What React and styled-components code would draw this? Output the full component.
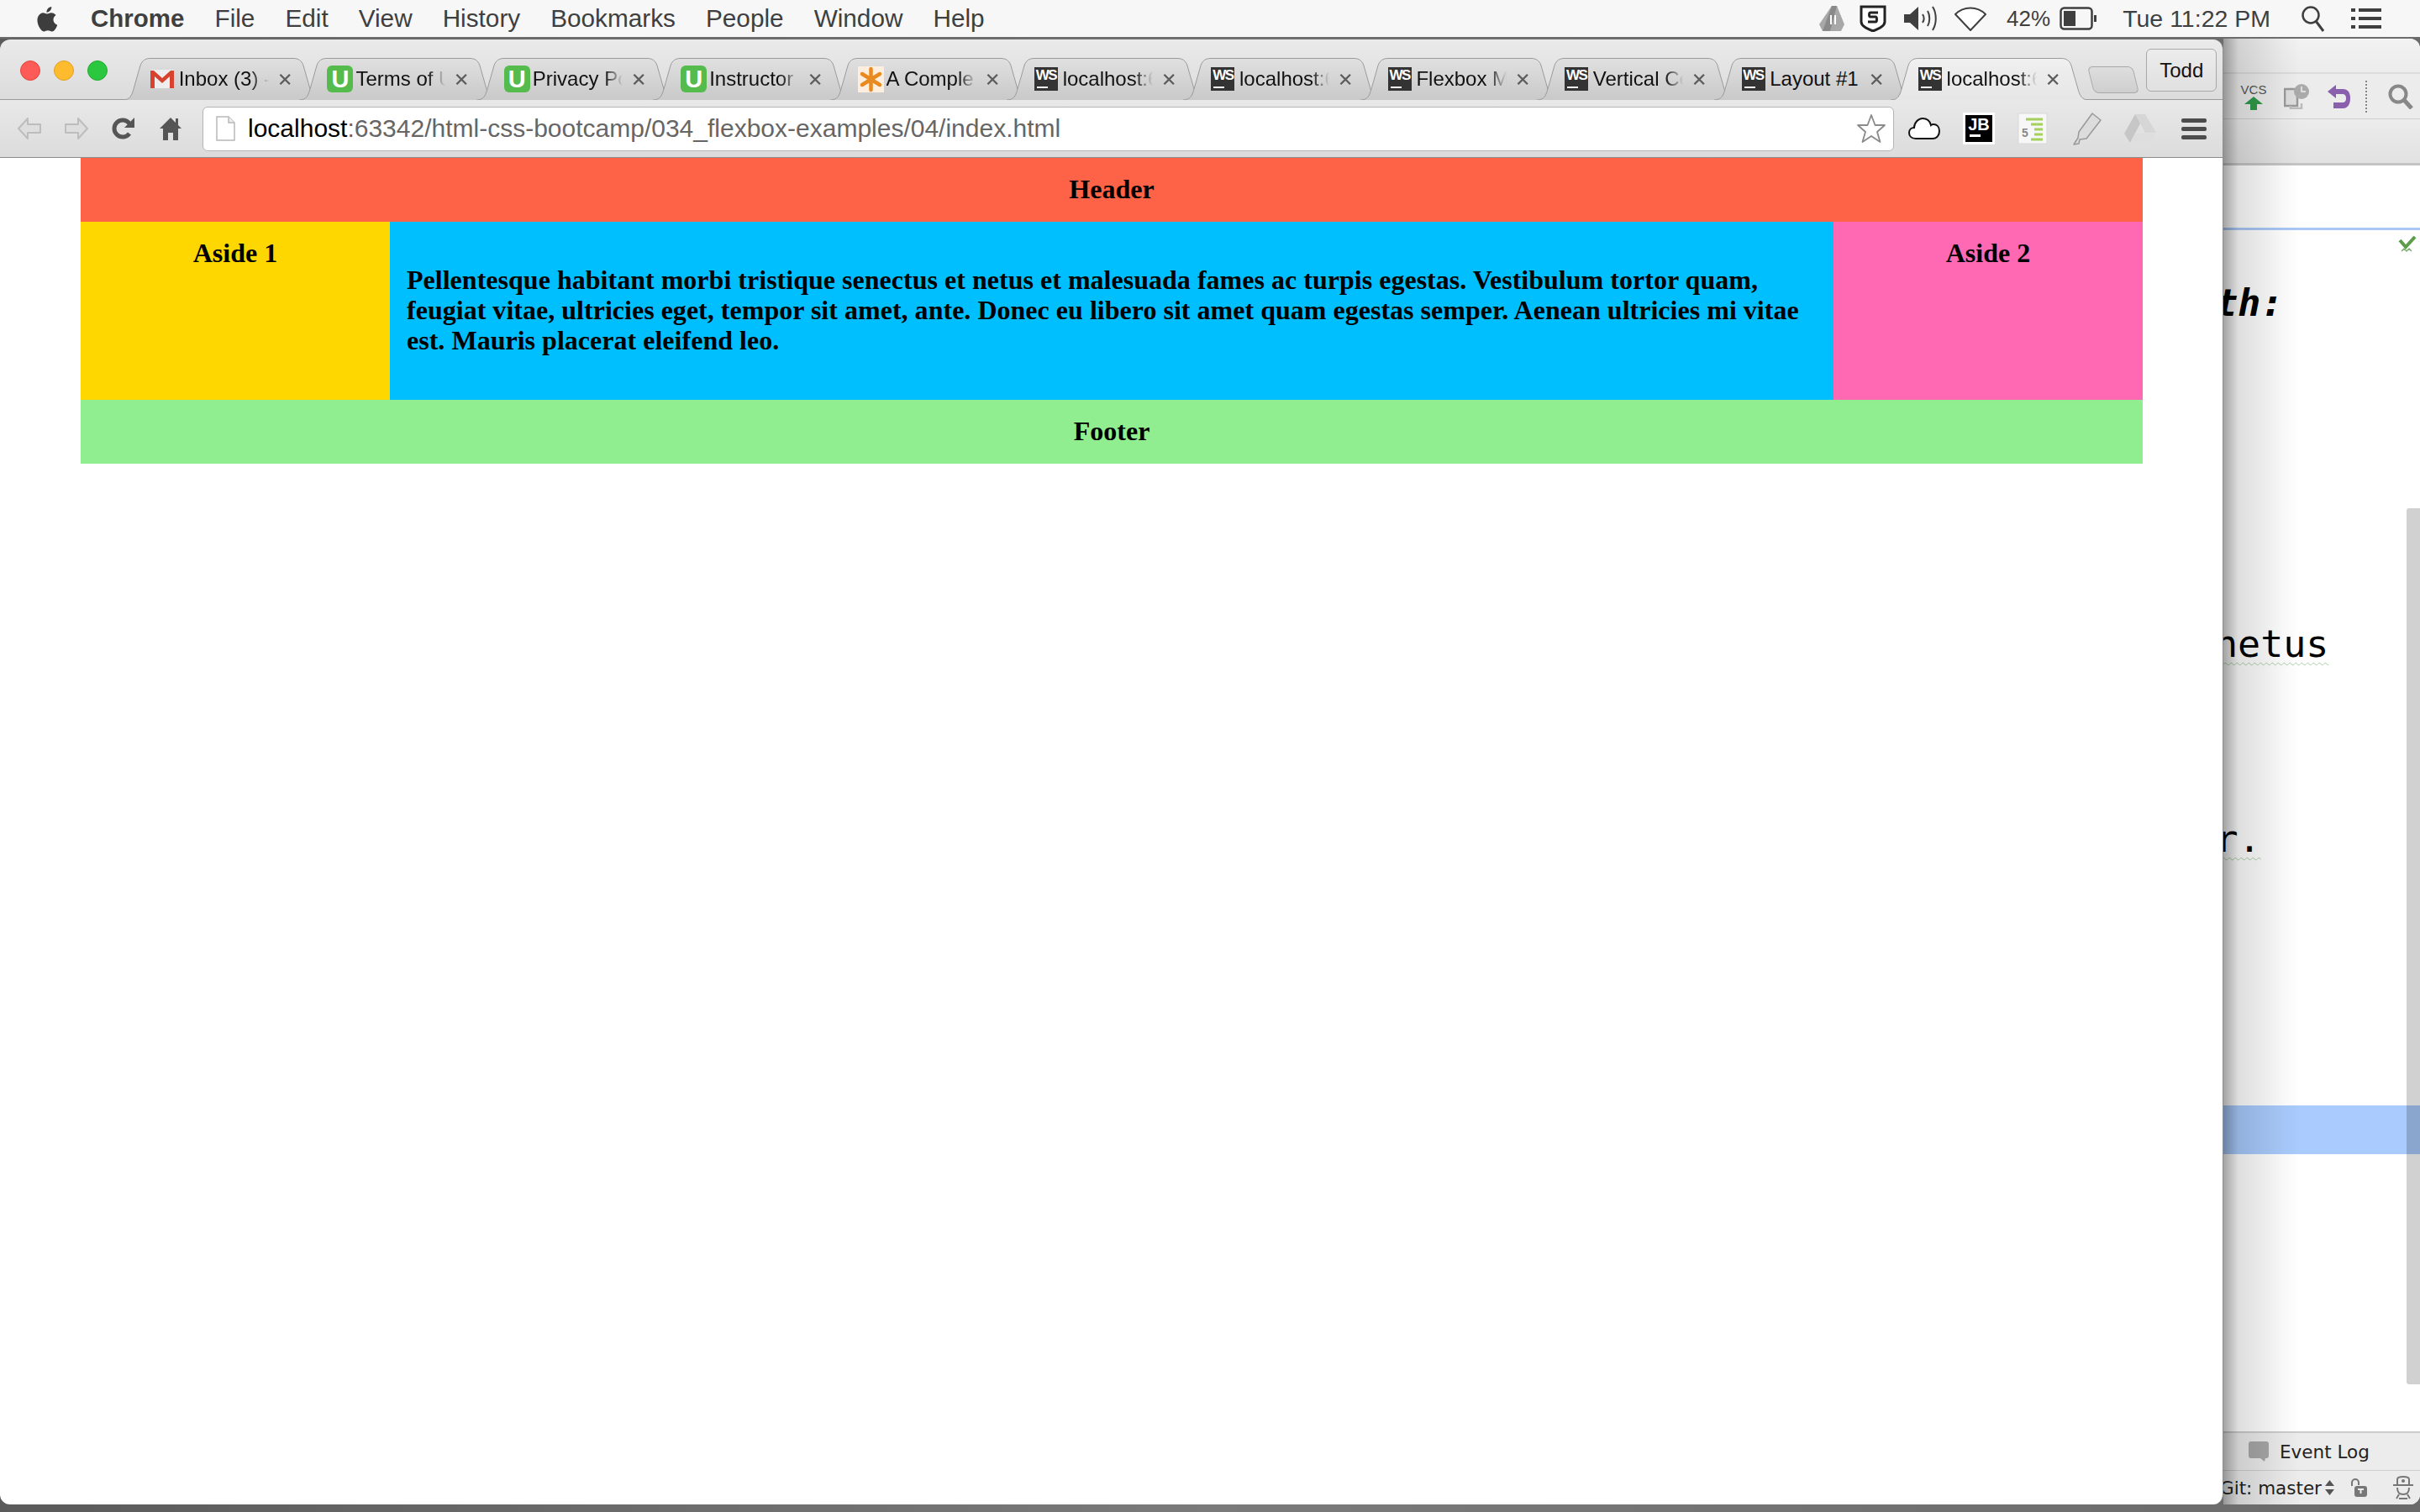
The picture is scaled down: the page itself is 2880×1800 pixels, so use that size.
import styled, { createGlobalStyle } from "styled-components";

const GlobalStyle = createGlobalStyle`
  html, body {
    margin: 0;
    padding: 0;
    background: #fff;
  }
`

const tabs = [
  { icon: 'gmail', title: 'Inbox (3) - G' },
  { icon: 'u', title: 'Terms of Us' },
  { icon: 'u', title: 'Privacy Po' },
  { icon: 'u', title: 'Instructor' },
  { icon: 'star', title: 'A Comple' },
  { icon: 'ws', title: 'localhost:6' },
  { icon: 'ws', title: 'localhost:6' },
  { icon: 'ws', title: 'Flexbox M' },
  { icon: 'ws', title: 'Vertical Ce' },
  { icon: 'ws', title: 'Layout #1', plain: true },
  { icon: 'ws', title: 'localhost:6', active: true },
];

const menus = ['File', 'Edit', 'View', 'History', 'Bookmarks', 'People', 'Window', 'Help'];

const TabIcon = ({ icon }) => {
  if (icon === 'u') return <UBadge>U</UBadge>;
  if (icon === 'ws') return <WsBadge>WS</WsBadge>;
  if (icon === 'gmail') {
    return (
      <svg width="28" height="22" viewBox="0 0 28 22">
        <rect width="28" height="22" fill="#eee" />
        <path d="M0 22V1h4l10 9 10-9h4v21h-5V8l-9 8-9-8v14z" fill="#d8432f" />
      </svg>
    );
  }
  return (
    <svg width="31" height="31" viewBox="0 0 31 31">
      <rect width="31" height="31" fill="#fdeee0" />
      <path d="M15.5 3v25M5 9l21 13M26 9L5 22" stroke="#e88a1f" strokeWidth="4.5" strokeLinecap="round" />
    </svg>
  );
};

const App = () => {
  return (
    <Desktop>
      <GlobalStyle />
      <MenuBar>
        <svg width="26" height="31" viewBox="0 0 26 31" style={{ marginRight: 4 }}>
          <path d="M21.5 16.5c0-3.600 3-5.300 3.100-5.400-1.700-2.500-4.300-2.800-5.200-2.900-2.200-.2-4.300 1.300-5.400 1.300s-2.800-1.300-4.700-1.300C7.400 8.300 5 9.700 3.700 11.900c-2.600 4.500-.7 11.200 1.900 14.900 1.200 1.800 2.700 3.800 4.600 3.700 1.900-.1 2.600-1.200 4.800-1.200s2.900 1.200 4.800 1.200c2 0 3.300-1.800 4.500-3.600 1.400-2.100 2-4.100 2-4.200-.1 0-4.800-1.800-4.800-6.200zM17.800 5.600c1-1.200 1.700-2.900 1.500-4.600-1.500.1-3.200 1-4.300 2.200-.9 1.100-1.800 2.800-1.500 4.500 1.700.1 3.300-.9 4.300-2.100z" fill="#3d3d3d" />
        </svg>
        <MenuTitle>Chrome</MenuTitle>
        {menus.map((m) => <MenuItem key={m}>{m}</MenuItem>)}
        <Tray>
          <svg width="30" height="30" viewBox="0 0 30 30">
            <path d="M15 0h6l9 22-4 8H4L0 22z" fill="#a8a8a8" />
            <path d="M15 0l6 0-8 30H4z" fill="#8a8a8a" />
            <path d="M13 11h2v11h-2zM18 11h2v11h-2z" fill="#fff" />
          </svg>
          <svg width="32" height="32" viewBox="0 0 32 32" style={{ marginLeft: 18 }}>
            <path d="M2 2h28v18c0 5-7 8-14 11C9 28 2 25 2 20z" fill="#fff" stroke="#222" strokeWidth="3" />
            <path d="M22 9h-9c-2 0-2 5 0 5h6c2 0 2 6 0 6h-9" fill="none" stroke="#222" strokeWidth="3" />
          </svg>
          <svg width="42" height="32" viewBox="0 0 42 32" style={{ marginLeft: 20 }}>
            <path d="M1 11h7l10-9v28L8 21H1z" fill="#3f3f3f" />
            <path d="M23 11c2 3 2 7 0 10M29 7c3 5 3 13 0 18M35 2c5 8 5 20 0 28" fill="none" stroke="#3f3f3f" strokeWidth="2" />
          </svg>
          <svg width="40" height="30" viewBox="0 0 40 30" style={{ marginLeft: 18 }}>
            <path d="M2 10C12 0 28 0 38 10L20 29z" fill="#fff" stroke="#3f3f3f" strokeWidth="2" strokeLinejoin="round" />
          </svg>
          <TrayText $size={26} style={{ marginLeft: 23 }}>42%</TrayText>
          <svg width="44" height="28" viewBox="0 0 44 28" style={{ marginLeft: 11 }}>
            <rect x="1.500" y="1.500" width="37" height="25" rx="4" fill="none" stroke="#3f3f3f" strokeWidth="2.500" />
            <rect x="5" y="5" width="14" height="18" fill="#3f3f3f" />
            <rect x="41" y="10" width="3" height="8" fill="#3f3f3f" />
          </svg>
          <TrayText $size={28.500} style={{ marginLeft: 31 }}>Tue 11:22 PM</TrayText>
          <svg width="30" height="32" viewBox="0 0 30 32" style={{ marginLeft: 36 }}>
            <circle cx="12" cy="12" r="9.500" fill="none" stroke="#3f3f3f" strokeWidth="2.500" />
            <path d="M18 19l9 12" stroke="#3f3f3f" strokeWidth="3" />
          </svg>
          <svg width="36" height="24" viewBox="0 0 36 24" style={{ marginLeft: 30 }}>
            <path d="M0 0h5v4H0zM9 0h27v4H9zM0 10h5v4H0zM9 10h27v4H9zM0 20h5v4H0zM9 20h27v4H9z" fill="#3f3f3f" />
          </svg>
        </Tray>
      </MenuBar>

      <Desk>
        <Browser>
          <TabStrip>
            <Lights>
              <Light $color="#fc5b57" $edge="#e2463f" />
              <Light $color="#ffbb2e" $edge="#e0a028" />
              <Light $color="#2bc83f" $edge="#25a934" />
            </Lights>
            <Tabs>
              {tabs.map((t, i) => (
                <Tab key={i} $active={t.active}>
                  <TabShape viewBox="0 0 236 50" $active={t.active}>
                    <defs>
                      <linearGradient id={`tab${i}`} x1="0" y1="0" x2="0" y2="1">
                        <stop offset="0" stopColor={t.active ? '#f0f0f0' : '#e0e0e0'} />
                        <stop offset="1" stopColor={t.active ? '#e6e6e6' : '#c9c9c9'} />
                      </linearGradient>
                    </defs>
                    <path
                      d="M0 50C9 50 11 44 13 37L21 9C23 3 27 .5 33 .5H203C209 .5 213 3 215 9L223 37C225 44 227 50 236 50"
                      fill={`url(#tab${i})`}
                      stroke="#9a9a9a"
                    />
                  </TabShape>
                  <TabIconSlot><TabIcon icon={t.icon} /></TabIconSlot>
                  <TabTitle $plain={t.plain}>{t.title}</TabTitle>
                  <svg width="15" height="15" viewBox="0 0 15 15" style={{ position: 'relative', marginRight: 10 }}>
                    <path d="M1.500 1.500l12 12M13.500 1.500l-12 12" stroke="#5c5c5c" strokeWidth="2.500" />
                  </svg>
                </Tab>
              ))}
            </Tabs>
            <NewTab />
            <ProfileButton>Todd</ProfileButton>
          </TabStrip>

          <Toolbar>
            <NavSlot>
              <svg width="32" height="28" viewBox="0 0 32 28">
                <path d="M14 2L3 14l11 12v-7h15V9H14z" fill="#dedede" stroke="#bdbdbd" strokeWidth="2" strokeLinejoin="round" />
              </svg>
            </NavSlot>
            <NavSlot>
              <svg width="32" height="28" viewBox="0 0 32 28">
                <path d="M18 2l11 12-11 12v-7H3V9h15z" fill="#dedede" stroke="#bdbdbd" strokeWidth="2" strokeLinejoin="round" />
              </svg>
            </NavSlot>
            <NavSlot>
              <svg width="30" height="30" viewBox="0 0 30 30">
                <path d="M22 21a10 10 0 1 1 0-12" fill="none" stroke="#555" strokeWidth="5" />
                <path d="M28 2v12H16z" fill="#555" />
              </svg>
            </NavSlot>
            <NavSlot>
              <svg width="26" height="30" viewBox="0 0 26 30">
                <path d="M13 2L0 15h4v14h6v-9h6v9h6V15h4l-4-4V3h-3v5z" fill="#555" />
              </svg>
            </NavSlot>
            <Omnibox>
              <svg width="23" height="30" viewBox="0 0 23 30">
                <path d="M1 1h14l7 7v21H1z" fill="#fff" stroke="#b8b8b8" strokeWidth="1.500" />
                <path d="M15 1v7h7" fill="#eee" stroke="#b8b8b8" strokeWidth="1.500" />
              </svg>
              <Url><b>localhost</b>:63342/html-css-bootcamp/034_flexbox-examples/04/index.html</Url>
              <StarSlot>
                <svg width="36" height="36" viewBox="0 0 36 36">
                  <path d="M18 2l4.500 12H34l-9 8 3.500 12L18 27 7.500 34 11 22l-9-8h11.500z" fill="#fff" stroke="#8a8a8a" strokeWidth="1.800" strokeLinejoin="round" />
                </svg>
              </StarSlot>
            </Omnibox>
            <Extensions>
              <ExtSlot>
                <svg width="40" height="28" viewBox="0 0 40 28">
                  <path d="M9 26C3 26 1 22 1 19c0-4 3-6 6-6 0-6 5-11 10-11 6 0 9 4 10 8 1-1 2-1 3-1 4 0 7 3 7 8 0 5-3 9-8 9z" fill="#fff" stroke="#111" strokeWidth="2" />
                </svg>
              </ExtSlot>
              <ExtSlot>
                <JbBadge>JB</JbBadge>
              </ExtSlot>
              <ExtSlot>
                <svg width="36" height="38" viewBox="0 0 36 38">
                  <rect x="1" y="1" width="34" height="36" fill="#f7f7f7" stroke="#d8d8d8" />
                  <path d="M10 8h20M16 14h14M20 20h10M20 26h10M16 32h14" stroke="#a4d05c" strokeWidth="3" />
                  <text x="5" y="29" fontSize="14" fontWeight="700" fontFamily="Liberation Sans, sans-serif" fill="#888">5</text>
                </svg>
              </ExtSlot>
              <ExtSlot>
                <svg width="38" height="40" viewBox="0 0 38 40">
                  <path d="M26 2l10 8-17 22-8 1-1 5-6 1 5-8 1-7z" fill="#dcdcdc" stroke="#999" strokeWidth="1.500" strokeLinejoin="round" />
                </svg>
              </ExtSlot>
              <ExtSlot>
                <svg width="38" height="34" viewBox="0 0 38 34">
                  <path d="M13 0h12l13 22H25z" fill="#d6d6d6" />
                  <path d="M13 0l6 11-12 23L0 23z" fill="#c6c6c6" />
                  <path d="M13 23h25l-6 11H7z" fill="#dedede" />
                </svg>
              </ExtSlot>
              <ExtSlot>
                <MenuBars><i /><i /><i /></MenuBars>
              </ExtSlot>
            </Extensions>
          </Toolbar>

          <Page>
            <PageHeader>Header</PageHeader>
            <Middle>
              <Aside $bg="#ffd700">Aside 1</Aside>
              <Main>
                <p>Pellentesque habitant morbi tristique senectus et netus et malesuada fames ac turpis egestas. Vestibulum tortor quam, feugiat vitae, ultricies eget, tempor sit amet, ante. Donec eu libero sit amet quam egestas semper. Aenean ultricies mi vitae est. Mauris placerat eleifend leo.</p>
              </Main>
              <Aside $bg="#ff69b4">Aside 2</Aside>
            </Middle>
            <PageFooter>Footer</PageFooter>
          </Page>
        </Browser>

        <Ide>
          <IdeTitle />
          <IdeToolbar>
            <Vcs>
              VCS
              <svg width="22" height="16" viewBox="0 0 22 16">
                <path d="M11 0l11 9h-7v7H7V9H0z" fill="#2f9a4a" />
              </svg>
            </Vcs>
            <svg width="30" height="30" viewBox="0 0 30 30">
              <rect x="1" y="6" width="15" height="20" fill="#ddd" stroke="#999" strokeWidth="2.500" />
              <path d="M8 26v3h13v-6" fill="none" stroke="#bbb" strokeWidth="2.500" />
              <circle cx="21" cy="9" r="9" fill="#aaa" />
              <path d="M21 3v6h5" fill="none" stroke="#eee" strokeWidth="1.500" />
            </svg>
            <svg width="28" height="30" viewBox="0 0 28 30">
              <path d="M11 1L1 9l10 8v-5h7c4 0 5 2 5 5s-1 5-5 5H8v7h11c6 0 9-5 9-12S25 6 19 6h-8z" fill="#8a5fae" />
            </svg>
            <Dots />
            <svg width="30" height="30" viewBox="0 0 30 30">
              <circle cx="12" cy="12" r="9.500" fill="none" stroke="#888" strokeWidth="4" />
              <path d="M19 19l9 10" stroke="#888" strokeWidth="5" />
            </svg>
          </IdeToolbar>
          <IdeTabsBand />
          <Editor>
            <CaretLine />
            <CodeLine $top={61} $shift={-91} $heading>width:</CodeLine>
            <CodeLine $top={354} $shift={-10} $squiggle>netus</CodeLine>
            <CodeLine $top={180} $shift={-145} $squiggle>semper.</CodeLine>
            <SelectedRow />
            <CheckMark width="22" height="20" viewBox="0 0 22 20">
              <path d="M2 5l7 8L20 1" fill="none" stroke="#5c9c4a" strokeWidth="4" />
              <path d="M4 18l3-3 3 3 3-3 3 3" fill="none" stroke="#7fb070" strokeWidth="1.500" />
            </CheckMark>
            <Scrollbar />
          </Editor>
          <StatusRow>
            <svg width="24" height="24" viewBox="0 0 24 24">
              <path d="M3 0h18a3 3 0 0 1 3 3v14a3 3 0 0 1-3 3h-1l-1 4-5-4H3a3 3 0 0 1-3-3V3a3 3 0 0 1 3-3z" fill="#a8a8a8" />
            </svg>
            <StatusText>Event Log</StatusText>
          </StatusRow>
          <GitRow>
            <GitText>Git: master</GitText>
            <svg width="11" height="18" viewBox="0 0 11 18" style={{ marginLeft: 4 }}>
              <path d="M5.500 0L11 7H0zM0 11h11l-5.500 7z" fill="#555" />
            </svg>
            <svg width="20" height="24" viewBox="0 0 20 24" style={{ marginLeft: 20 }}>
              <path d="M1 10V6a4 4 0 0 1 8 0v3" fill="none" stroke="#777" strokeWidth="2" />
              <rect x="4" y="10" width="15" height="13" rx="3" fill="#777" />
              <path d="M8 14h7M11.500 14v5" stroke="#eee" strokeWidth="2" />
            </svg>
            <svg width="26" height="28" viewBox="0 0 26 28" style={{ marginLeft: 29 }}>
              <path d="M6 11V4c0-2 3-3 7-3s7 1 7 3v7M1 11h24M6 14c0 6 2 8 7 8s7-2 7-8M5 27l3-5M21 27l-3-5M8 27h10" fill="none" stroke="#777" strokeWidth="2" />
              <circle cx="13" cy="6" r="2" fill="#777" />
            </svg>
          </GitRow>
        </Ide>
      </Desk>
    </Desktop>
  )
}

export default App;


const Desktop = styled.div`
  width: 2880px;
  height: 1800px;
  display: flex;
  flex-direction: column;
  overflow: hidden;
  background: linear-gradient(90deg, #5a5a5a, #7a7a7a 50%, #6a6a6a);
`

const MenuBar = styled.div`
  height: 44px;
  flex-shrink: 0;
  display: flex;
  align-items: center;
  padding-left: 42px;
  gap: 36px;
  background: #f7f7f8;
  border-bottom: 2px solid #6c6c6c;
  font-family: "Liberation Sans", Arial, sans-serif;
  font-size: 29.750px;
  color: #3f3f3f;
`

const MenuTitle = styled.span`
  font-weight: 700;
  font-size: 29.500px;
`

const MenuItem = styled.span``

const Tray = styled.div`
  margin-left: auto;
  padding-right: 46px;
  display: flex;
  align-items: center;
`

const TrayText = styled.span`
  font-size: ${(p) => p.$size}px;
  white-space: nowrap;
`

const Desk = styled.div`
  flex: 1;
  min-height: 0;
  display: flex;
  padding-bottom: 9px;
`

const Browser = styled.div`
  width: 2646px;
  flex-shrink: 0;
  margin-top: 1px;
  display: flex;
  flex-direction: column;
  border-radius: 12px 12px 12px 12px;
  overflow: hidden;
  border-right: 1px solid #8f8f8f;
  box-sizing: border-box;
  font-family: "Liberation Sans", Arial, sans-serif;
`

const TabStrip = styled.div`
  height: 72px;
  flex-shrink: 0;
  box-sizing: border-box;
  display: flex;
  padding-left: 24px;
  background: linear-gradient(#eaeaea, #dcdcdc);
  border-bottom: 1px solid #9a9a9a;
`

const Lights = styled.div`
  display: flex;
  gap: 16px;
  margin: 25px 18px 0 0;
  align-self: flex-start;
`

const Light = styled.div`
  width: 24px;
  height: 24px;
  box-sizing: border-box;
  border-radius: 50%;
  background: ${(p) => p.$color};
  border: 1px solid ${(p) => p.$edge};
`

const Tabs = styled.div`
  display: flex;
  margin-top: 22px;
  height: 50px;
`

const Tab = styled.div`
  position: relative;
  width: 210.400px;
  height: 50px;
  display: flex;
  align-items: center;
  z-index: ${(p) => (p.$active ? 2 : 1)};
  font-size: 24px;
  color: #111;
`

const TabShape = styled.svg`
  position: absolute;
  left: 0;
  top: 0;
  width: 236px;
  height: 50px;
`

const TabIconSlot = styled.div`
  position: relative;
  width: 32px;
  margin-left: 33px;
  display: flex;
  align-items: center;
  justify-content: flex-start;
`

const UBadge = styled.div`
  width: 31px;
  height: 32px;
  border-radius: 6px;
  background: #55bb4d;
  color: #fff;
  font-size: 29px;
  font-weight: 700;
  line-height: 32px;
  text-align: center;
`

const WsBadge = styled.div`
  width: 28px;
  height: 28px;
  box-sizing: border-box;
  background: #333;
  color: #fff;
  font-size: 17px;
  font-weight: 700;
  line-height: 19px;
  letter-spacing: -1.500px;
  text-align: center;
  position: relative;

  &::after {
    content: "";
    position: absolute;
    left: 3px;
    bottom: 3px;
    width: 13px;
    height: 2px;
    background: #fff;
  }
`

const TabTitle = styled.div`
  position: relative;
  width: 112px;
  margin: 0 12px 0 3px;
  overflow: hidden;
  white-space: nowrap;
  ${(p) => !p.$plain && `
    mask-image: linear-gradient(90deg, #000 80%, transparent 100%);
  `}
`

const NewTab = styled.div`
  width: 52px;
  height: 30px;
  margin: 32px 0 0 28px;
  border: 1px solid #a8a8a8;
  border-radius: 6px;
  background: linear-gradient(#dedede, #cfcfcf);
  transform: skewX(14deg);
`

const ProfileButton = styled.div`
  width: 84px;
  height: 51px;
  box-sizing: border-box;
  margin: 11px 0 0 12px;
  border: 1px solid #a8a8a8;
  border-radius: 6px;
  background: linear-gradient(#ececec, #e0e0e0);
  font-size: 24px;
  color: #111;
  display: flex;
  align-items: center;
  justify-content: center;
`

const Toolbar = styled.div`
  height: 69px;
  flex-shrink: 0;
  box-sizing: border-box;
  display: flex;
  align-items: center;
  padding: 0 0 0 13px;
  gap: 12px;
  background: linear-gradient(#e8e8e8, #dcdcdc);
  border-bottom: 1px solid #8c8c8c;
`

const NavSlot = styled.div`
  width: 44px;
  display: flex;
  justify-content: center;
`

const Omnibox = styled.div`
  width: 2013px;
  height: 53px;
  box-sizing: border-box;
  margin-left: 4px;
  padding: 0 8px 0 15px;
  display: flex;
  align-items: center;
  background: #fff;
  border: 1px solid #b4b4b4;
  border-radius: 6px;
`

const Url = styled.div`
  margin-left: 15px;
  font-size: 30px;
  color: #666;
  white-space: nowrap;

  b {
    font-weight: 400;
    color: #000;
  }
`

const StarSlot = styled.div`
  margin-left: auto;
  display: flex;
`

const Extensions = styled.div`
  display: flex;
  margin-left: -7px;
`

const ExtSlot = styled.div`
  width: 64px;
  display: flex;
  align-items: center;
  justify-content: center;
`

const JbBadge = styled.div`
  width: 38px;
  height: 38px;
  box-sizing: border-box;
  border: 3px solid #fff;
  background: #000;
  color: #fff;
  font-size: 20px;
  font-weight: 700;
  line-height: 22px;
  text-align: center;
  position: relative;

  &::after {
    content: "";
    position: absolute;
    left: 5px;
    bottom: 6px;
    width: 13px;
    height: 3px;
    background: #fff;
  }
`

const MenuBars = styled.div`
  width: 30px;
  display: flex;
  flex-direction: column;
  gap: 5px;

  i {
    display: block;
    height: 5px;
    border-radius: 2px;
    background: #4c4c4c;
  }
`

const Page = styled.div`
  flex: 1;
  background: #fff;
  padding: 0 95px 0 96px;
  font-family: "Liberation Serif", "Times New Roman", serif;
  font-size: 32px;
  font-weight: 700;
  line-height: 36px;
  letter-spacing: .02px;
  color: #000;
  text-align: center;
`

const PageHeader = styled.header`
  background: #ff6347;
  padding: 19px 20px 21px;
`

const Middle = styled.div`
  display: flex;
`

const Aside = styled.aside`
  width: 368px;
  flex-shrink: 0;
  box-sizing: border-box;
  padding: 19px 20px 21px;
  background: ${(p) => p.$bg};
`

const Main = styled.main`
  flex: 1;
  padding: 19px 20px 21px;
  background: #00bfff;
  text-align: left;

  p {
    margin: 32px 0;
  }
`

const PageFooter = styled.footer`
  background: #90ee90;
  padding: 19px 20px 21px;
`

const Ide = styled.div`
  flex: 1;
  position: relative;
  display: flex;
  flex-direction: column;
  border-radius: 0 12px 12px 0;
  overflow: hidden;
  background: #fff;

  &::before {
    content: "";
    position: absolute;
    inset: 0;
    z-index: 3;
    pointer-events: none;
    background: linear-gradient(90deg, rgba(0,0,0,.36), rgba(0,0,0,.13) 18px, rgba(0,0,0,.09) 40px, rgba(0,0,0,.03) 70px, transparent 92px);
  }
`

const IdeTitle = styled.div`
  height: 40px;
  flex-shrink: 0;
  background: linear-gradient(#f2f2f2, #ececec);
  border-bottom: 2px solid #dcdcdc;
`

const IdeToolbar = styled.div`
  height: 54px;
  flex-shrink: 0;
  box-sizing: border-box;
  display: flex;
  align-items: center;
  gap: 21px;
  padding-left: 21px;
  background: #ececec;
  border-bottom: 1px solid #d0d0d0;
  overflow: hidden;
`

const Vcs = styled.div`
  width: 30px;
  display: flex;
  flex-direction: column;
  align-items: center;
  font-family: "Liberation Sans", Arial, sans-serif;
  font-size: 15px;
  line-height: 16px;
  color: #555;
`

const Dots = styled.div`
  width: 0;
  height: 38px;
  margin: 0 4px 0 -3px;
  border-left: 2px dotted #888;
`

const IdeTabsBand = styled.div`
  height: 52px;
  flex-shrink: 0;
  background: linear-gradient(#ececec, #e2e2e2);
  border-bottom: 3px solid #c4c4c4;
`

const Editor = styled.div`
  flex: 1;
  min-height: 0;
  position: relative;
  padding-top: 74px;
  display: flex;
  flex-direction: column;
  background: #fff;
  border-bottom: 1px solid #c8c8c8;
`

const CaretLine = styled.div`
  height: 3px;
  background: #a9c8f6;
  flex-shrink: 0;
`

const CodeLine = styled.div`
  height: 52px;
  flex-shrink: 0;
  margin: ${(p) => p.$top}px 0 0 ${(p) => p.$shift}px;
  font-family: "DejaVu Sans Mono", "Liberation Mono", monospace;
  font-size: 45px;
  line-height: 52px;
  color: #000;
  white-space: nowrap;
  ${(p) => p.$heading && `
    font-weight: 700;
    font-style: italic;
  `}
  ${(p) => p.$squiggle && `
    text-decoration: underline wavy #a8cfa4 1px;
    text-underline-offset: 6px;
  `}
`

const SelectedRow = styled.div`
  height: 58px;
  flex-shrink: 0;
  margin-top: 291px;
  background: #a9cbfd;
`

const CheckMark = styled.svg`
  position: absolute;
  right: 4px;
  top: 84px;
`

const Scrollbar = styled.div`
  position: absolute;
  right: 0;
  top: 408px;
  width: 16px;
  height: 1043px;
  background: rgba(0, 0, 0, .18);
  border-radius: 3px 0 0 3px;
`

const StatusRow = styled.div`
  height: 46px;
  flex-shrink: 0;
  box-sizing: border-box;
  display: flex;
  align-items: center;
  gap: 13px;
  padding-left: 30px;
  background: #ececec;
  border-top: 1px solid #cfcfcf;
  border-bottom: 1px solid #cfcfcf;
`

const StatusText = styled.span`
  font-family: "DejaVu Sans", "Open Sans", sans-serif;
  font-size: 21.500px;
  color: #222;
`

const GitRow = styled.div`
  flex: 0 0 40px;
  display: flex;
  align-items: center;
  background: #ececec;
`

const GitText = styled(StatusText)`
  margin-left: -4px;
  white-space: nowrap;
`
